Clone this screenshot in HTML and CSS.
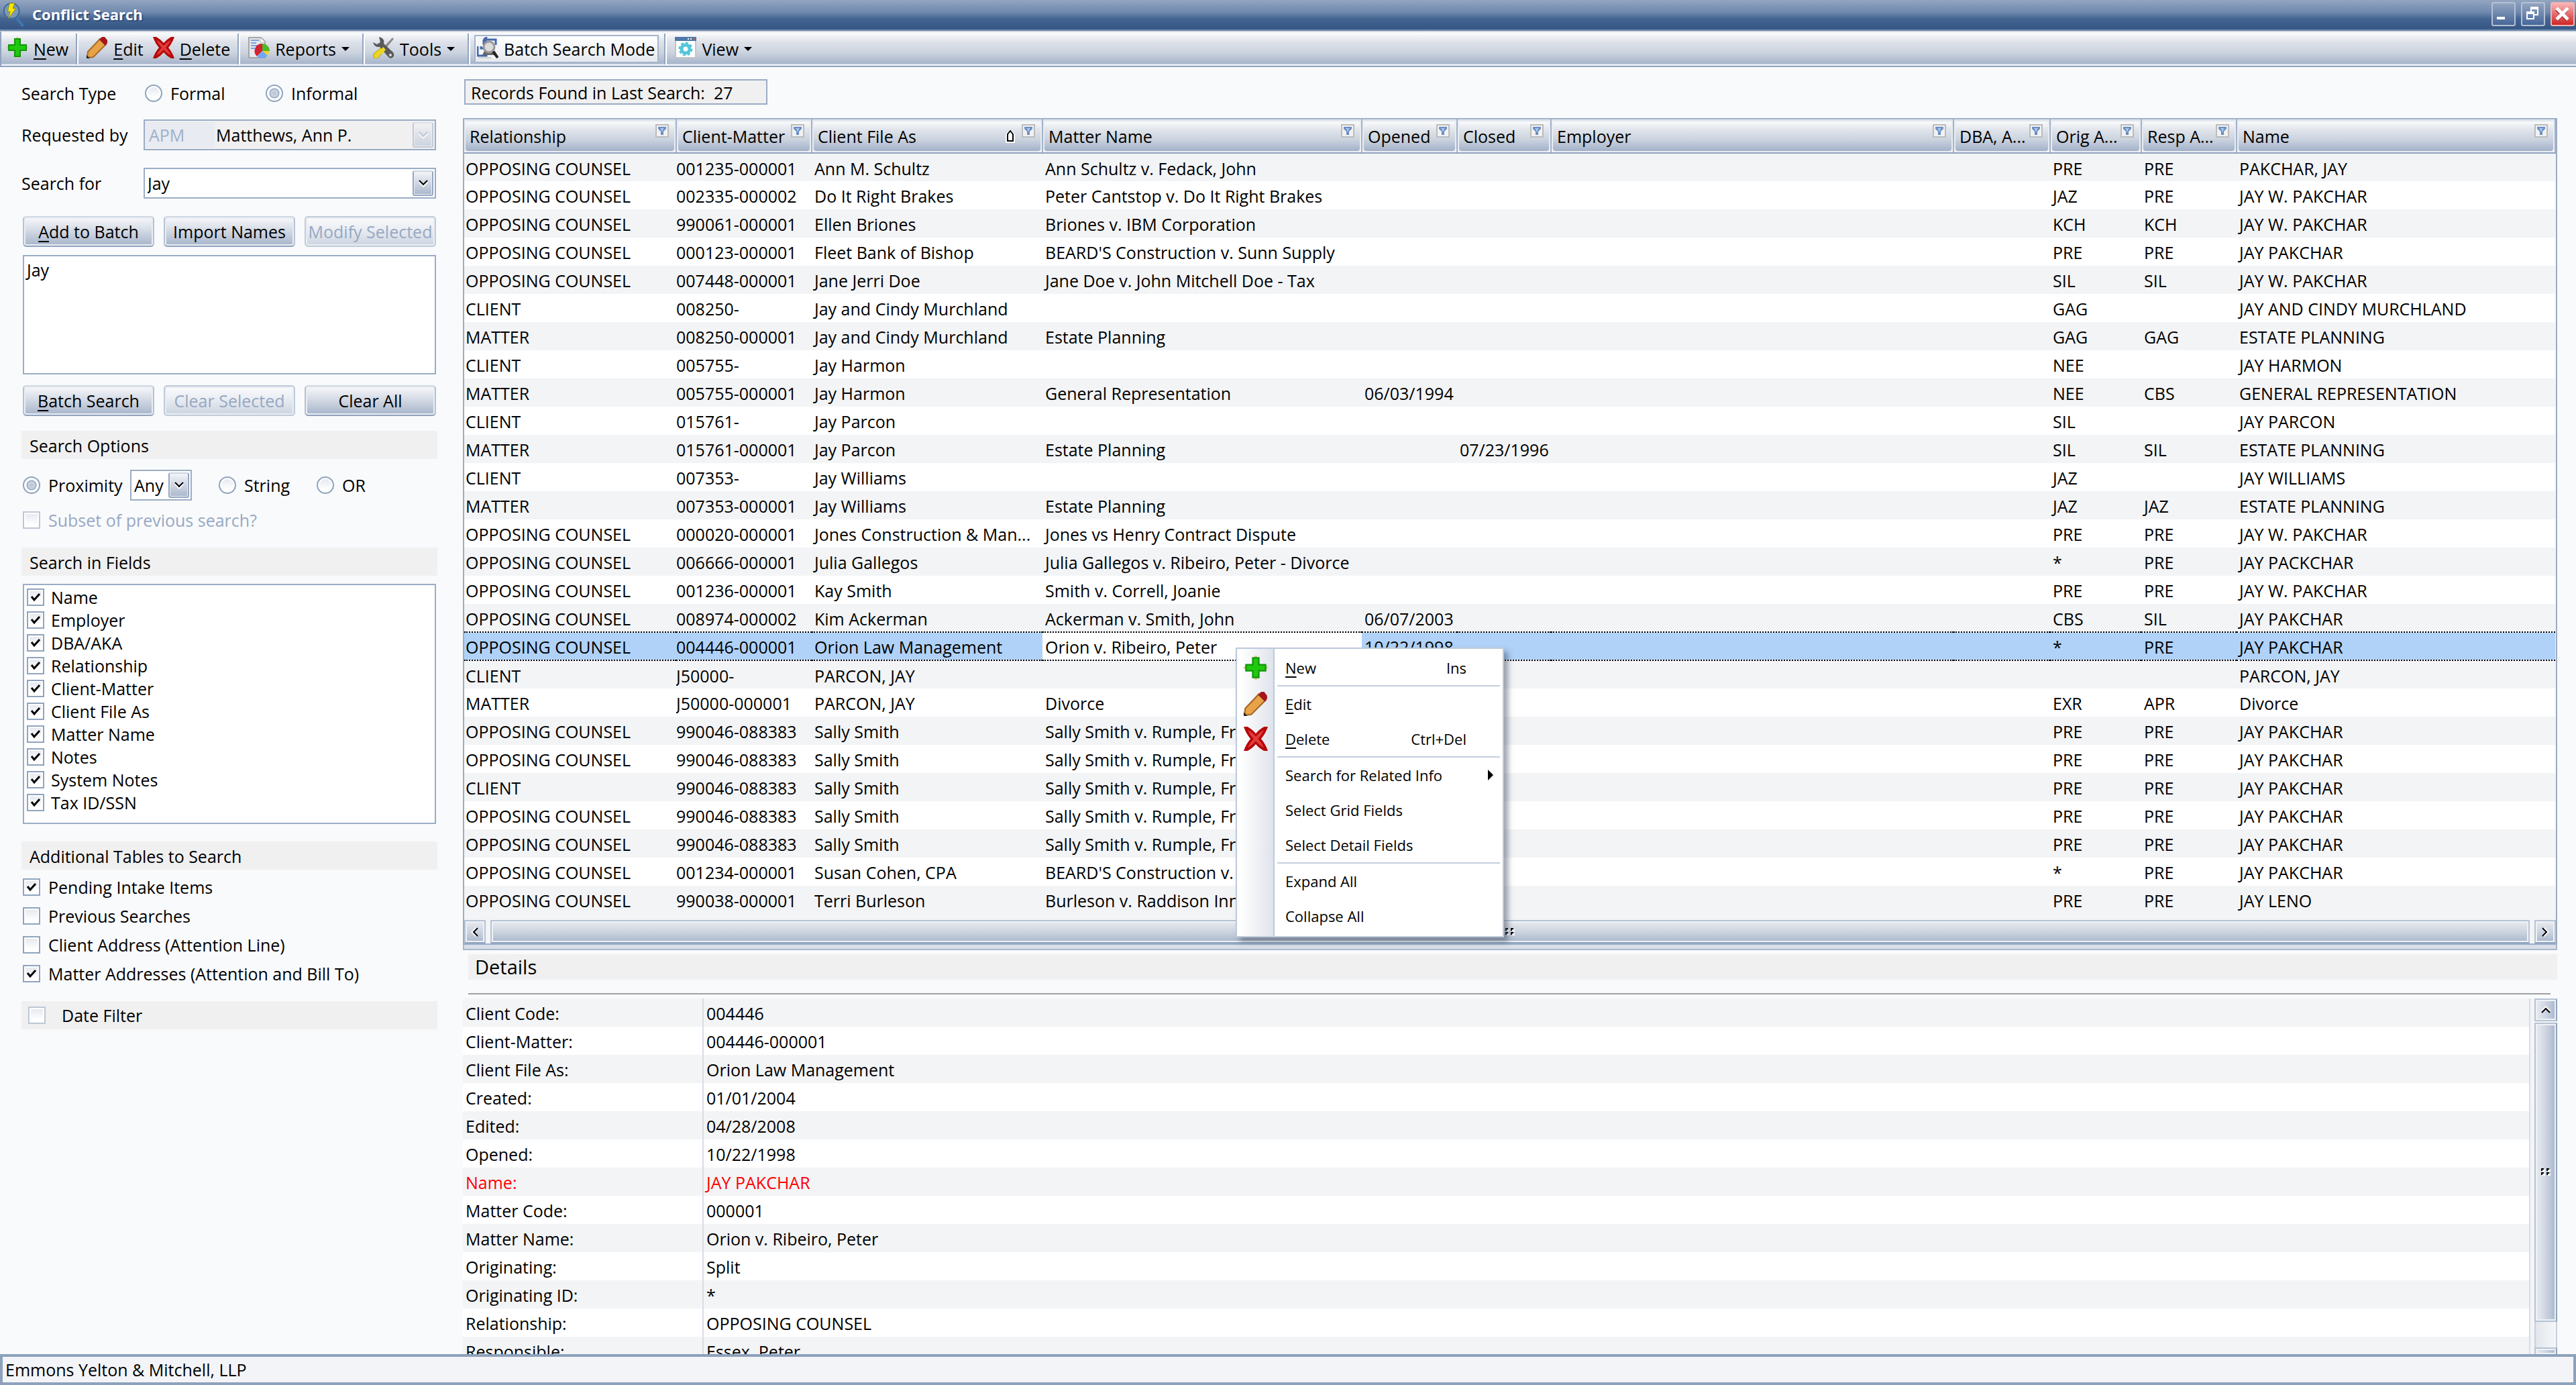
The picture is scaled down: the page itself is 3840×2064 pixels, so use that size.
FILE: index.html
```html
<!DOCTYPE html>
<html lang="en">
<head>
<meta charset="utf-8">
<title>Conflict Search</title>
<link rel="stylesheet" href="styles.css">
</head>
<body>

<!-- icons -->
<svg class="defs" width="0" height="0">
  <symbol id="i-plus" viewBox="0 0 32 32">
    <path d="M16 0v32M0 16h32" stroke="#d9c98a" stroke-width="3"/>
    <path d="M12 3h8v9h9v8h-9v9h-8v-9H3v-8h9z" fill="#1fc90f" stroke="#129608" stroke-width="2"/>
  </symbol>
  <symbol id="i-pencil" viewBox="0 0 32 32">
    <path d="M1 31l1-9L20 3l9 8L10 30z" fill="#e8a248" stroke="#a86b25" stroke-width="2"/>
    <path d="M19 4l4-4h4l4 5v4l-3 4z" fill="#a3161b"/>
    <path d="M0 32v-5l5 5z" fill="#222"/>
  </symbol>
  <symbol id="i-cross" viewBox="0 0 32 32">
    <path d="M0 0h5q7 4 11 9 4-5 11-9h5q-3 9-9 16 6 7 9 16h-5q-7-4-11-9-4 5-11 9H0q3-9 9-16Q3 9 0 0z" fill="#b50707"/>
    <path d="M5 4q7 4 11 9 4-5 11-9-3 7-8 12 5 5 8 12-7-4-11-9-4 5-11 9 3-7 8-12-5-5-8-12z" fill="#e23a3a"/>
  </symbol>
  <symbol id="i-report" viewBox="0 0 32 32">
    <path d="M1 1h18l6 6v24H1z" fill="#e6e8ec" stroke="#a5a5a5" stroke-width="2"/>
    <path d="M18 1v7h7" fill="#fff" stroke="#b5b5b5"/>
    <path d="M4 5h12M4 9h8M4 13h11M4 17h6" stroke="#7ba0dc" stroke-width="2"/>
    <path d="M21 21V10a11 11 0 0 0-8 19z" fill="#d5222f"/>
    <path d="M21 21V10a11 11 0 0 1 11 11z" fill="#4fb829"/>
    <path d="M21 21h11l-3 7z" fill="#efd42c"/>
    <path d="M21 21l-8 8q8 6 16-1z" fill="#6fa8f5"/>
  </symbol>
  <symbol id="i-tools" viewBox="0 0 32 32">
    <path d="M29 1l2 2-11 13-3-2z" fill="#8a8a8a"/>
    <path d="M16 13l4 4L7 32H1v-7z" fill="#ecd524" stroke="#b39d14"/>
    <path d="M9 0q9 2 7 10l14 13q3 5-1 8-4 2-7-2L10 15Q2 16 0 8l6 3 5-3z" fill="#5a5a5a"/>
    <circle cx="26" cy="27" r="2" fill="#ddd"/>
    <path d="M15 15l4 4-6 7-4-4z" fill="#ecd524"/>
  </symbol>
  <symbol id="i-batch" viewBox="0 0 32 32">
    <path d="M0 0h32v32H0z" fill="#f4f6f9"/>
    <path d="M1 14v14h13V17H6v-3M10 4h18v8M10 4l5-4M10 4l5 4M10 4v8" fill="none" stroke="#4468ad" stroke-width="3"/>
    <path d="M2 31h20" stroke="#aaa"/>
    <path d="M8 27h22l-3-6H11z" fill="#666"/>
    <circle cx="18" cy="15" r="8" fill="#dcdcdc" stroke="#999" stroke-width="3"/>
    <path d="M24 22l7 9" stroke="#222" stroke-width="4"/>
  </symbol>
  <symbol id="i-view" viewBox="0 0 32 32">
    <path d="M1 1h30v30H1z" fill="#fff" stroke="#c4c4c4" stroke-width="2"/>
    <path d="M0 0h32v6H0z" fill="#4d78a8"/>
    <path d="M19 3h2M23 3h2" stroke="#fff" stroke-width="2"/>
    <path d="M27 3h3" stroke="#e0562b" stroke-width="2"/>
    <circle cx="16" cy="18" r="6" fill="none" stroke="#55c6da" stroke-width="5"/>
    <circle cx="16" cy="18" r="9" fill="none" stroke="#55c6da" stroke-width="3" stroke-dasharray="4 3"/>
  </symbol>
  <symbol id="i-chev" viewBox="0 0 16 12">
    <path d="M2 4l6 6 6-6" fill="none" stroke="#fff" stroke-width="3"/>
    <path d="M2 2l6 6 6-6" fill="none" stroke="currentColor" stroke-width="2"/>
  </symbol>
  <symbol id="i-filter" viewBox="0 0 20 20">
    <path d="M1 1h18v18H1z" fill="#f1f1f1" stroke="#bcbcbc" stroke-width="2"/>
    <path d="M4 4h12v3l-4 4v5H8v-5L4 7z" fill="#6a8fc4"/>
    <path d="M7 6h6l-2 3v2H9V9z" fill="#a9c6ec"/>
  </symbol>
  <symbol id="i-grip" viewBox="0 0 14 12">
    <path d="M2 4h4M10 4h4M2 10h4M10 10h4M5 2v3M13 2v3M5 8v3M13 8v3" stroke="#fff" stroke-width="2"/>
    <path d="M0 0h4v2H2v2H0zM8 0h4v2h-2v2H8zM0 6h4v2H2v2H0zM8 6h4v2h-2v2H8z" fill="#000"/>
  </symbol>
</svg>

<header class="titlebar">
  <svg class="app-icon" viewBox="0 0 32 42">
    <path d="M21 27l10 13" stroke="#3f78b4" stroke-width="4"/>
    <circle cx="13" cy="16" r="12" fill="#8097b0" stroke="#3c6b9d" stroke-width="2"/>
    <path d="M10 4h8l-3 8h5L8 28l3-11H7z" fill="#f7e808" stroke="#8f8a1b"/>
  </svg>
  <h1>Conflict Search</h1>
  <div class="win-buttons">
    <button aria-label="Minimize"><svg viewBox="0 0 32 32"><path d="M6 20h12v4H6z" fill="#fff"/></svg></button>
    <button aria-label="Restore"><svg viewBox="0 0 32 32"><path d="M13 12V7h10v10h-5M7 14h10v9H7z" fill="none" stroke="#fff" stroke-width="2"/><path d="M12 7h12M6 14h12" stroke="#fff" stroke-width="4"/></svg></button>
    <button class="close" aria-label="Close"><svg viewBox="0 0 32 32"><path d="M7 9l16 16M23 9L7 25" stroke="#a81e20" stroke-width="5"/><path d="M7 7l17 17M24 7L7 24" stroke="#fff" stroke-width="5"/></svg></button>
  </div>
</header>

<nav class="toolbar">
  <div class="group">
    <button><svg class="icon"><use href="#i-plus"/></svg><span><u>N</u>ew</span></button>
  </div>
  <div class="group">
    <button><svg class="icon"><use href="#i-pencil"/></svg><span><u>E</u>dit</span></button>
    <button><svg class="icon"><use href="#i-cross"/></svg><span><u>D</u>elete</span></button>
  </div>
  <div class="group">
    <button><svg class="icon"><use href="#i-report"/></svg><span>Reports</span><i class="arrow"></i></button>
  </div>
  <div class="group">
    <button><svg class="icon"><use href="#i-tools"/></svg><span>Tools</span><i class="arrow"></i></button>
  </div>
  <div class="group toggle">
    <button class="on"><svg class="icon"><use href="#i-batch"/></svg><span>Batch Search Mode</span></button>
  </div>
  <div class="group">
    <button><svg class="icon"><use href="#i-view"/></svg><span>View</span><i class="arrow"></i></button>
  </div>
</nav>

<div class="main">
  <form class="sidebar">
    <div class="line type-line">
      <span class="caption">Search Type</span>
      <input type="radio" name="type" id="formal"><label for="formal">Formal</label>
      <input type="radio" name="type" id="informal" checked><label for="informal">Informal</label>
    </div>
    <div class="line">
      <label class="caption" for="reqby">Requested by</label>
      <div class="combo disabled">
        <input type="text" class="code" value="APM" aria-label="Requested by code" disabled>
        <select id="reqby" disabled><option>Matthews, Ann P.</option></select>
        <span class="drop"><svg><use href="#i-chev"/></svg></span>
      </div>
    </div>
    <div class="line search-line">
      <label class="caption" for="searchfor">Search for</label>
      <div class="combo">
        <input type="text" id="searchfor" value="Jay">
        <span class="drop"><svg><use href="#i-chev"/></svg></span>
      </div>
    </div>
    <div class="btns">
      <button type="button" class="btn"><u>A</u>dd to Batch</button>
      <button type="button" class="btn">Import Names</button>
      <button type="button" class="btn" disabled>Modify Selected</button>
    </div>
    <textarea class="batch" aria-label="Batch names">Jay</textarea>
    <div class="btns">
      <button type="button" class="btn"><u>B</u>atch Search</button>
      <button type="button" class="btn" disabled>Clear Selected</button>
      <button type="button" class="btn">Clear All</button>
    </div>

    <h2>Search Options</h2>
    <div class="line options">
      <input type="radio" name="opt" id="prox" checked><label for="prox">Proximity</label>
      <div class="combo small">
        <select aria-label="Proximity distance"><option>Any</option></select>
        <span class="drop"><svg><use href="#i-chev"/></svg></span>
      </div>
      <input type="radio" name="opt" id="str"><label for="str">String</label>
      <input type="radio" name="opt" id="or"><label for="or">OR</label>
    </div>
    <div class="line subset">
      <input type="checkbox" id="subset" disabled><label for="subset">Subset of previous search?</label>
    </div>

    <h2>Search in Fields</h2>
    <div class="fields">
      <div><input type="checkbox" id="f1" checked><label for="f1">Name</label></div>
      <div><input type="checkbox" id="f2" checked><label for="f2">Employer</label></div>
      <div><input type="checkbox" id="f3" checked><label for="f3">DBA/AKA</label></div>
      <div><input type="checkbox" id="f4" checked><label for="f4">Relationship</label></div>
      <div><input type="checkbox" id="f5" checked><label for="f5">Client-Matter</label></div>
      <div><input type="checkbox" id="f6" checked><label for="f6">Client File As</label></div>
      <div><input type="checkbox" id="f7" checked><label for="f7">Matter Name</label></div>
      <div><input type="checkbox" id="f8" checked><label for="f8">Notes</label></div>
      <div><input type="checkbox" id="f9" checked><label for="f9">System Notes</label></div>
      <div><input type="checkbox" id="f10" checked><label for="f10">Tax ID/SSN</label></div>
    </div>

    <h2>Additional Tables to Search</h2>
    <div class="extra">
      <div><input type="checkbox" id="t1" checked><label for="t1">Pending Intake Items</label></div>
      <div><input type="checkbox" id="t2"><label for="t2">Previous Searches</label></div>
      <div><input type="checkbox" id="t3"><label for="t3">Client Address (Attention Line)</label></div>
      <div><input type="checkbox" id="t4" checked><label for="t4">Matter Addresses (Attention and Bill To)</label></div>
    </div>

    <div class="date-filter">
      <input type="checkbox" id="date"><label for="date">Date Filter</label>
    </div>
  </form>

  <div class="content">
    <div class="found">Records Found in Last Search:&nbsp; 27</div>

    <div class="grid">
      <table class="results">
        <colgroup>
          <col class="c-rel"><col class="c-cm"><col class="c-file"><col class="c-matter"><col class="c-open"><col class="c-closed"><col class="c-emp"><col class="c-dba"><col class="c-orig"><col class="c-resp"><col>
        </colgroup>
        <thead>
          <tr>
            <th><div><span>Relationship</span><svg class="filter"><use href="#i-filter"/></svg></div></th>
            <th><div><span>Client-Matter</span><svg class="filter"><use href="#i-filter"/></svg></div></th>
            <th><div><span>Client File As</span><svg class="sort" viewBox="0 0 14 20"><path d="M7 0l7 7v13H0V7z" fill="#fff"/><path d="M3 17V7l4-5 4 5v10z" fill="#fff" stroke="#000" stroke-width="2"/></svg><svg class="filter"><use href="#i-filter"/></svg></div></th>
            <th><div><span>Matter Name</span><svg class="filter"><use href="#i-filter"/></svg></div></th>
            <th><div><span>Opened</span><svg class="filter"><use href="#i-filter"/></svg></div></th>
            <th><div><span>Closed</span><svg class="filter"><use href="#i-filter"/></svg></div></th>
            <th><div><span>Employer</span><svg class="filter"><use href="#i-filter"/></svg></div></th>
            <th><div><span>DBA, A...</span><svg class="filter"><use href="#i-filter"/></svg></div></th>
            <th><div><span>Orig A...</span><svg class="filter"><use href="#i-filter"/></svg></div></th>
            <th><div><span>Resp A...</span><svg class="filter"><use href="#i-filter"/></svg></div></th>
            <th><div><span>Name</span><svg class="filter"><use href="#i-filter"/></svg></div></th>
          </tr>
        </thead>
        <tbody>
          <tr><td>OPPOSING COUNSEL</td><td>001235-000001</td><td>Ann M. Schultz</td><td>Ann Schultz v. Fedack, John</td><td></td><td></td><td></td><td></td><td>PRE</td><td>PRE</td><td>PAKCHAR, JAY</td></tr>
          <tr><td>OPPOSING COUNSEL</td><td>002335-000002</td><td>Do It Right Brakes</td><td>Peter Cantstop v. Do It Right Brakes</td><td></td><td></td><td></td><td></td><td>JAZ</td><td>PRE</td><td>JAY W. PAKCHAR</td></tr>
          <tr><td>OPPOSING COUNSEL</td><td>990061-000001</td><td>Ellen Briones</td><td>Briones v. IBM Corporation</td><td></td><td></td><td></td><td></td><td>KCH</td><td>KCH</td><td>JAY W. PAKCHAR</td></tr>
          <tr><td>OPPOSING COUNSEL</td><td>000123-000001</td><td>Fleet Bank of Bishop</td><td>BEARD'S Construction v. Sunn Supply</td><td></td><td></td><td></td><td></td><td>PRE</td><td>PRE</td><td>JAY PAKCHAR</td></tr>
          <tr><td>OPPOSING COUNSEL</td><td>007448-000001</td><td>Jane Jerri Doe</td><td>Jane Doe v. John Mitchell Doe - Tax</td><td></td><td></td><td></td><td></td><td>SIL</td><td>SIL</td><td>JAY W. PAKCHAR</td></tr>
          <tr><td>CLIENT</td><td>008250-</td><td>Jay and Cindy Murchland</td><td></td><td></td><td></td><td></td><td></td><td>GAG</td><td></td><td>JAY AND CINDY MURCHLAND</td></tr>
          <tr><td>MATTER</td><td>008250-000001</td><td>Jay and Cindy Murchland</td><td>Estate Planning</td><td></td><td></td><td></td><td></td><td>GAG</td><td>GAG</td><td>ESTATE PLANNING</td></tr>
          <tr><td>CLIENT</td><td>005755-</td><td>Jay Harmon</td><td></td><td></td><td></td><td></td><td></td><td>NEE</td><td></td><td>JAY HARMON</td></tr>
          <tr><td>MATTER</td><td>005755-000001</td><td>Jay Harmon</td><td>General Representation</td><td>06/03/1994</td><td></td><td></td><td></td><td>NEE</td><td>CBS</td><td>GENERAL REPRESENTATION</td></tr>
          <tr><td>CLIENT</td><td>015761-</td><td>Jay Parcon</td><td></td><td></td><td></td><td></td><td></td><td>SIL</td><td></td><td>JAY PARCON</td></tr>
          <tr><td>MATTER</td><td>015761-000001</td><td>Jay Parcon</td><td>Estate Planning</td><td></td><td>07/23/1996</td><td></td><td></td><td>SIL</td><td>SIL</td><td>ESTATE PLANNING</td></tr>
          <tr><td>CLIENT</td><td>007353-</td><td>Jay Williams</td><td></td><td></td><td></td><td></td><td></td><td>JAZ</td><td></td><td>JAY WILLIAMS</td></tr>
          <tr><td>MATTER</td><td>007353-000001</td><td>Jay Williams</td><td>Estate Planning</td><td></td><td></td><td></td><td></td><td>JAZ</td><td>JAZ</td><td>ESTATE PLANNING</td></tr>
          <tr><td>OPPOSING COUNSEL</td><td>000020-000001</td><td>Jones Construction &amp; Man...</td><td>Jones vs Henry Contract Dispute</td><td></td><td></td><td></td><td></td><td>PRE</td><td>PRE</td><td>JAY W. PAKCHAR</td></tr>
          <tr><td>OPPOSING COUNSEL</td><td>006666-000001</td><td>Julia Gallegos</td><td>Julia Gallegos v. Ribeiro, Peter - Divorce</td><td></td><td></td><td></td><td></td><td>*</td><td>PRE</td><td>JAY PACKCHAR</td></tr>
          <tr><td>OPPOSING COUNSEL</td><td>001236-000001</td><td>Kay Smith</td><td>Smith v. Correll, Joanie</td><td></td><td></td><td></td><td></td><td>PRE</td><td>PRE</td><td>JAY W. PAKCHAR</td></tr>
          <tr><td>OPPOSING COUNSEL</td><td>008974-000002</td><td>Kim Ackerman</td><td>Ackerman v. Smith, John</td><td>06/07/2003</td><td></td><td></td><td></td><td>CBS</td><td>SIL</td><td>JAY PAKCHAR</td></tr>
          <tr class="selected"><td>OPPOSING COUNSEL</td><td>004446-000001</td><td>Orion Law Management</td><td class="focus">Orion v. Ribeiro, Peter</td><td>10/22/1998</td><td></td><td></td><td></td><td>*</td><td>PRE</td><td>JAY PAKCHAR</td></tr>
          <tr><td>CLIENT</td><td>J50000-</td><td>PARCON, JAY</td><td></td><td></td><td></td><td></td><td></td><td></td><td></td><td>PARCON, JAY</td></tr>
          <tr><td>MATTER</td><td>J50000-000001</td><td>PARCON, JAY</td><td>Divorce</td><td></td><td></td><td></td><td></td><td>EXR</td><td>APR</td><td>Divorce</td></tr>
          <tr><td>OPPOSING COUNSEL</td><td>990046-088383</td><td>Sally Smith</td><td>Sally Smith v. Rumple, Fred</td><td></td><td></td><td></td><td></td><td>PRE</td><td>PRE</td><td>JAY PAKCHAR</td></tr>
          <tr><td>OPPOSING COUNSEL</td><td>990046-088383</td><td>Sally Smith</td><td>Sally Smith v. Rumple, Fred</td><td></td><td></td><td></td><td></td><td>PRE</td><td>PRE</td><td>JAY PAKCHAR</td></tr>
          <tr><td>CLIENT</td><td>990046-088383</td><td>Sally Smith</td><td>Sally Smith v. Rumple, Fred</td><td></td><td></td><td></td><td></td><td>PRE</td><td>PRE</td><td>JAY PAKCHAR</td></tr>
          <tr><td>OPPOSING COUNSEL</td><td>990046-088383</td><td>Sally Smith</td><td>Sally Smith v. Rumple, Fred</td><td></td><td></td><td></td><td></td><td>PRE</td><td>PRE</td><td>JAY PAKCHAR</td></tr>
          <tr><td>OPPOSING COUNSEL</td><td>990046-088383</td><td>Sally Smith</td><td>Sally Smith v. Rumple, Fred</td><td></td><td></td><td></td><td></td><td>PRE</td><td>PRE</td><td>JAY PAKCHAR</td></tr>
          <tr><td>OPPOSING COUNSEL</td><td>001234-000001</td><td>Susan Cohen, CPA</td><td>BEARD'S Construction v.</td><td></td><td></td><td></td><td></td><td>*</td><td>PRE</td><td>JAY PAKCHAR</td></tr>
          <tr><td>OPPOSING COUNSEL</td><td>990038-000001</td><td>Terri Burleson</td><td>Burleson v. Raddison Inn</td><td></td><td></td><td></td><td></td><td>PRE</td><td>PRE</td><td>JAY LENO</td></tr>
        </tbody>
      </table>
      <div class="hscroll">
        <button class="end left" aria-label="Scroll left"><svg><use href="#i-chev"/></svg></button>
        <div class="thumb"><svg class="grip"><use href="#i-grip"/></svg></div>
        <button class="end right" aria-label="Scroll right"><svg><use href="#i-chev"/></svg></button>
      </div>

      <div class="menu" role="menu">
        <button role="menuitem"><svg class="icon"><use href="#i-plus"/></svg><span><u>N</u>ew</span><kbd>Ins</kbd></button>
        <hr>
        <button role="menuitem"><svg class="icon"><use href="#i-pencil"/></svg><span><u>E</u>dit</span></button>
        <button role="menuitem"><svg class="icon"><use href="#i-cross"/></svg><span><u>D</u>elete</span><kbd>Ctrl+Del</kbd></button>
        <hr>
        <button role="menuitem"><span>Search for Related Info</span><i class="more"></i></button>
        <button role="menuitem"><span>Select Grid Fields</span></button>
        <button role="menuitem"><span>Select Detail Fields</span></button>
        <hr>
        <button role="menuitem"><span>Expand All</span></button>
        <button role="menuitem"><span>Collapse All</span></button>
      </div>
    </div>
    <div class="splitter"></div>

    <h2 class="details-title">Details</h2>
    <div class="rule"></div>
    <div class="details">
      <table>
        <tr><th>Client Code:</th><td>004446</td></tr>
        <tr><th>Client-Matter:</th><td>004446-000001</td></tr>
        <tr><th>Client File As:</th><td>Orion Law Management</td></tr>
        <tr><th>Created:</th><td>01/01/2004</td></tr>
        <tr><th>Edited:</th><td>04/28/2008</td></tr>
        <tr><th>Opened:</th><td>10/22/1998</td></tr>
        <tr class="red"><th>Name:</th><td>JAY PAKCHAR</td></tr>
        <tr><th>Matter Code:</th><td>000001</td></tr>
        <tr><th>Matter Name:</th><td>Orion v. Ribeiro, Peter</td></tr>
        <tr><th>Originating:</th><td>Split</td></tr>
        <tr><th>Originating ID:</th><td>*</td></tr>
        <tr><th>Relationship:</th><td>OPPOSING COUNSEL</td></tr>
        <tr><th>Responsible:</th><td>Essex, Peter</td></tr>
      </table>
      <div class="vscroll">
        <button class="end up" aria-label="Scroll up"><svg><use href="#i-chev"/></svg></button>
        <div class="thumb"><svg class="grip"><use href="#i-grip"/></svg></div>
        <div class="track"></div>
        <div class="end stub"></div>
      </div>
    </div>
  </div>
</div>

<footer class="status">Emmons Yelton &amp; Mitchell, LLP</footer>

</body>
</html>
```
FILE: styles.css
```css
*
{
	box-sizing: border-box;
}
body
{
	margin: 0;
	height: 100vh;
	overflow: hidden;
	display: flex;
	flex-direction: column;
	background: #f9fafc;
	color: #000;
	font: 25px/32px "Open Sans", "Noto Sans", sans-serif;
}
button,input,select,textarea
{
	font: inherit;
	color: inherit;
	margin: 0;
	padding: 0;
	border: 0;
	background: none;
}
u
{
	text-underline-offset: 4px;
	text-decoration-thickness: 2px;
	text-decoration-skip-ink: none;
}
h1,h2
{
	margin: 0;
	font-weight: 400;
}
.defs
{
	position: absolute;
}
.icon
{
	width: 32px;
	height: 32px;
	flex: none;
}

/* title bar */
.titlebar
{
	flex: none;
	height: 46px;
	display: flex;
	align-items: center;
	padding: 0 2px 4px 4px;
	background: linear-gradient(#93a5c0, #6f88ad 40%, #456692 60%, #355684 94%, #6e87aa 96%);
	color: #fff;
}
.app-icon
{
	width: 32px;
	height: 40px;
}
.titlebar h1
{
	font-size: 22px;
	line-height: 32px;
	font-weight: 700;
	padding-left: 12px;
	flex: 1;
	text-shadow: 2px 2px 0 #2f4e7c;
}
.win-buttons
{
	display: flex;
	gap: 8px;
}
.win-buttons button
{
	width: 36px;
	height: 36px;
	border: 2px solid #b4c1d4;
	border-radius: 3px;
	background: linear-gradient(#93a5c0, #47679a);
}
.win-buttons svg
{
	display: block;
	width: 32px;
	height: 32px;
}
.win-buttons .close
{
	border-color: #f0b5b5;
	background: linear-gradient(#f8b5b5, #cf2526);
}

/* toolbar */
.toolbar
{
	flex: none;
	height: 54px;
	display: flex;
	align-items: stretch;
	padding: 2px 0;
	border: 2px solid #8fa3bf;
	border-top-color: #d5dce6;
	border-right: 0;
	background: linear-gradient(#fdfdfe, #dde1e9 30%, #ccd4df 60%, #a7b4ca 94%, #f0f3f7 96%);
}
.toolbar .group
{
	display: flex;
	gap: 14px;
	padding: 0 13px 0 12px;
	border-right: 2px solid #fff;
	box-shadow: inset -2px 0 0 #93a6c1;
}
.toolbar .group:first-child
{
	padding-left: 8px;
}
.toolbar .group:last-child
{
	border: 0;
	box-shadow: none;
}
.toolbar button
{
	display: flex;
	align-items: center;
	gap: 8px;
}
.toolbar .icon
{
	margin-bottom: 4px;
}
.toolbar .toggle
{
	padding: 2px 10px 2px 6px;
}
.toolbar .on
{
	padding: 0 4px 0 2px;
	border: 2px solid #a5b5cb;
	background: linear-gradient(#fff, #e4e8ee);
}
.arrow
{
	border: 6px solid transparent;
	border-top-color: #000;
	border-bottom: 0;
	margin-right: 8px;
}

.main
{
	flex: 1;
	min-height: 0;
	display: flex;
}

/* left panel */
.sidebar
{
	flex: none;
	width: 690px;
	padding: 18px 38px 0 32px;
}
.line
{
	display: flex;
	align-items: center;
	height: 46px;
	margin: 0 2px 26px 0;
}
.type-line
{
	height: 42px;
	margin-bottom: 18px;
}
.caption
{
	width: 182px;
	flex: none;
}
.type-line .caption
{
	width: 184px;
}
.line label
{
	padding-left: 12px;
}
.line label.caption
{
	padding-left: 0;
}
.type-line label
{
	width: 154px;
}
input[type=radio],input[type=checkbox]
{
	appearance: none;
	flex: none;
	width: 26px;
	height: 26px;
	border: 2px solid #8fa4be;
	background: linear-gradient(#e3e7ed, #fff 80%);
	box-shadow: inset 0 0 0 2px #fff;
}
input[type=radio]
{
	border-radius: 50%;
}
input[type=radio]:checked
{
	background: radial-gradient(#b9c3d3 0, #ccd4e0 5px, #8fa4be 7px, #fff 8px);
}
input[type=checkbox]:checked
{
	background: url("data:image/svg+xml,%3Csvg xmlns='http://www.w3.org/2000/svg' viewBox='0 0 22 22'%3E%3Cpath d='M5 10l4 5 8-9' fill='none' stroke='black' stroke-width='3'/%3E%3C/svg%3E"), linear-gradient(#e3e7ed, #fff 80%);
}
input[type=checkbox]:disabled
{
	border-color: #bbc8d9;
}
input:disabled + label
{
	color: #97a8c3;
}
.combo
{
	flex: 1;
	min-width: 0;
	height: 46px;
	display: flex;
	border: 2px solid #9badc5;
	background: #fff;
	padding: 2px;
}
.combo input,.combo select
{
	flex: 1;
	min-width: 0;
	appearance: none;
	padding: 2px;
	opacity: 1;
}
.combo .drop
{
	flex: none;
	width: 31px;
	display: flex;
	align-items: center;
	justify-content: center;
	border: 2px solid #93a6c1;
	border-top-color: #ccd5e1;
	border-radius: 3px;
	background: linear-gradient(#f3f5f8, #a9b7cc);
	box-shadow: inset 0 0 0 1px #eef1f5;
}
.combo .drop svg
{
	width: 16px;
	height: 12px;
}
.combo.disabled
{
	background: #f0f0f0;
	padding-left: 0;
}
.combo.disabled .code
{
	flex: none;
	width: 104px;
	padding-left: 6px;
	background: #e8ebf1;
	color: #9fb0c9;
}
.combo.disabled .drop
{
	opacity: .5;
	color: #8ba0be;
}
.search-line
{
	margin-bottom: 26px;
}
.btns
{
	display: flex;
	gap: 14px;
	margin: 0 2px;
}
.btn
{
	flex: 1 1 0;
	min-width: 0;
	height: 46px;
	white-space: nowrap;
	display: flex;
	align-items: center;
	justify-content: center;
	border: 2px solid #8fa3bf;
	border-top-color: #d0d8e3;
	border-left-color: #b6c3d5;
	border-right-color: #b6c3d5;
	border-radius: 5px;
	background: linear-gradient(#f7f8fa, #d9dee7 40%, #a6b4ca);
	box-shadow: inset 0 0 0 2px #e9edf2;
}
.btn:disabled
{
	color: #97a8c3;
	border-color: #c0ccda;
	background: linear-gradient(#fafbfc, #ebeef3 40%, #ccd4e0);
}
.batch
{
	display: block;
	width: calc(100% - 4px);
	height: 178px;
	margin: 12px 2px 16px;
	padding: 4px;
	border: 2px solid #9badc5;
	background: #fff;
	resize: none;
}
.sidebar h2
{
	height: 42px;
	margin: 22px 0 0;
	padding: 6px 12px;
	font-size: 25px;
	line-height: 32px;
	background: #f0f0f0;
}
.options
{
	margin: 16px 2px;
}
.options .small
{
	flex: none;
	width: 92px;
	margin: 0 40px 0 14px;
}
.options label[for=str]
{
	width: 120px;
}
.options label[for=prox]
{
	width: 120px;
}
.line.subset
{
	height: 26px;
	margin: 0 2px;
}
.subset + h2
{
	margin-top: 28px;
}
.fields
{
	height: 358px;
	margin: 12px 2px 26px;
	padding: 1px 4px;
	border: 2px solid #9badc5;
	background: #fff;
}
.fields div
{
	height: 34px;
	display: flex;
	align-items: center;
	gap: 10px;
}
.extra
{
	padding: 4px 2px 0;
}
.extra div
{
	height: 43px;
	display: flex;
	align-items: center;
	gap: 12px;
}
.date-filter
{
	height: 42px;
	margin-top: 20px;
	padding: 0 10px;
	display: flex;
	align-items: center;
	gap: 24px;
	background: #f0f0f0;
}
.date-filter input[type=checkbox]
{
	border-color: #bbc8d9;
}

/* right side */
.content
{
	flex: 1;
	min-width: 0;
	display: flex;
	flex-direction: column;
	padding: 18px 28px 0 0;
}
.found
{
	width: 452px;
	height: 38px;
	margin: 0 2px 20px;
	padding: 2px 8px;
	line-height: 32px;
	border: 2px solid #9badc5;
	background: #f0f0f0;
	white-space: nowrap;
}
.grid
{
	flex: none;
	position: relative;
	border: 2px solid #9badc5;
	background: #f3f4f6;
}
.results
{
	width: 100%;
	table-layout: fixed;
	border-collapse: collapse;
}
.c-rel { width: 316px; }
.c-cm { width: 202px; }
.c-file { width: 344px; }
.c-matter { width: 476px; }
.c-open { width: 142px; }
.c-closed { width: 140px; }
.c-emp { width: 600px; }
.c-dba { width: 144px; }
.c-orig { width: 136px; }
.c-resp { width: 142px; }
.results th,.results td
{
	padding: 2px 0 0 4px;
	height: 42px;
	text-align: left;
	font-weight: 400;
	white-space: nowrap;
	overflow: hidden;
}
.results td:nth-child(1)
{
	padding-left: 2px;
}
.results td:nth-child(2)
{
	padding-left: 0;
}
.results th
{
	height: 50px;
	padding: 0;
	border-right: 2px solid #a3b3ca;
	border-bottom: 2px solid #8fa3bf;
}
.results th div
{
	height: 48px;
	display: flex;
	align-items: center;
	padding: 0 8px 0 6px;
	border: 2px solid #e9edf2;
	border-top-color: #dde3eb;
	border-radius: 0 0 6px 6px;
	background: linear-gradient(#fafbfc, #dfe3ea 30%, #ccd4df 60%, #a3b1c8);
}
.results th span
{
	flex: 1;
}
.filter
{
	flex: none;
	width: 20px;
	height: 20px;
	align-self: flex-start;
	margin-top: 4px;
}
.sort
{
	width: 14px;
	height: 20px;
	margin-right: 10px;
}
.results tbody tr:nth-child(odd)
{
	background: #f3f4f6;
}
.results tbody tr:nth-child(even)
{
	background: #fff;
}
.results tbody tr.selected
{
	background: #b0d2f8;
}
.results .selected td
{
	border-top: 2px dotted #000;
	border-bottom: 2px dotted #000;
}
.results .focus
{
	background: #fff;
}

/* scroll bars */
.hscroll
{
	display: flex;
	gap: 7px;
	height: 35px;
	margin-top: 9px;
}
.thumb,.end
{
	display: flex;
	align-items: center;
	justify-content: center;
	border: 2px solid #b6c3d5;
	border-bottom-color: #8fa3bf;
	box-shadow: inset 0 0 0 2px #eef1f5;
	background: linear-gradient(#e8ebf1, #ccd4de 50%, #a9b7cc);
}
.thumb
{
	flex: 1;
}
.hscroll .end
{
	width: 32px;
}
.end svg
{
	width: 16px;
	height: 12px;
}
.left svg
{
	transform: rotate(90deg);
}
.right svg
{
	transform: rotate(-90deg);
}
.up svg
{
	transform: rotate(180deg);
}
.grip
{
	width: 14px;
	height: 12px;
}
.splitter
{
	flex: none;
	height: 8px;
	border: 2px solid #a9b7cc;
	border-width: 0 2px 2px;
	background: #d9dfe8;
}

/* popup menu */
.menu
{
	position: absolute;
	left: 1150px;
	top: 787px;
	width: 400px;
	padding: 2px 4px 4px 6px;
	border: 2px solid #bccadb;
	background: linear-gradient(90deg, #fff 6px, #dfe3eb 54px, #bccadb 54px, #bccadb 56px, #fff 56px);
	box-shadow: 6px 6px 8px rgba(60, 70, 90, .5);
	font-size: 22px;
}
.menu button
{
	width: 100%;
	height: 52px;
	display: flex;
	align-items: center;
	padding: 0 10px 0 4px;
	text-align: left;
}
.menu span
{
	flex: 1;
	margin-left: 62px;
}
.menu .icon + span
{
	margin-left: 30px;
}
.menu .icon
{
	width: 36px;
	height: 36px;
	margin-right: -4px;
}
.menu kbd
{
	font: inherit;
	margin-right: 40px;
}
.menu hr
{
	height: 2px;
	margin: 0 0 0 54px;
	border: 0;
	background: #c3cedd;
}
.more
{
	border: 8px solid transparent;
	border-left-color: #000;
	border-right: 0;
}

/* details */
.details-title
{
	flex: none;
	height: 38px;
	margin: 6px 0 20px 8px;
	padding: 0 10px;
	font-size: 29px;
	line-height: 38px;
	background: #f0f0f0;
}
.rule
{
	flex: none;
	height: 2px;
	margin: 0 10px 6px 8px;
	background: #a0a0a0;
}
.details
{
	flex: 1;
	min-height: 0;
	overflow: hidden;
	display: flex;
	gap: 6px;
	background: #f3f4f6;
}
.details table
{
	flex: 1;
	align-self: flex-start;
	border-collapse: collapse;
	border-right: 2px solid #d7dde6;
}
.details th,.details td
{
	height: 42px;
	padding: 2px 4px 0;
	text-align: left;
	font-weight: 400;
}
.details th
{
	width: 358px;
	border-right: 2px solid #d7dde6;
}
.details tr:nth-child(even)
{
	background: #fff;
}
.details .red
{
	color: #f00;
}
.vscroll
{
	flex: none;
	width: 34px;
	display: flex;
	flex-direction: column;
}
.vscroll .thumb,.vscroll .end
{
	border-color: #b6c3d5;
	border-right-color: #8fa3bf;
	background: linear-gradient(90deg, #e8ebf1, #d4dae5 40%, #a9b7cc);
}
.vscroll .end
{
	height: 34px;
	margin-bottom: 2px;
}
.vscroll .track
{
	height: 38px;
	border: 2px solid #c7d0dd;
	border-width: 0 2px;
	background: linear-gradient(90deg, #e3e6ec, #f5f6f8);
}
.vscroll .stub
{
	height: 10px;
	margin: 0;
	border-bottom: 0;
}

.status
{
	flex: none;
	height: 46px;
	padding: 3px 4px;
	border: 4px solid #8ca1bb;
	background: #f3f4f7;
}
```
